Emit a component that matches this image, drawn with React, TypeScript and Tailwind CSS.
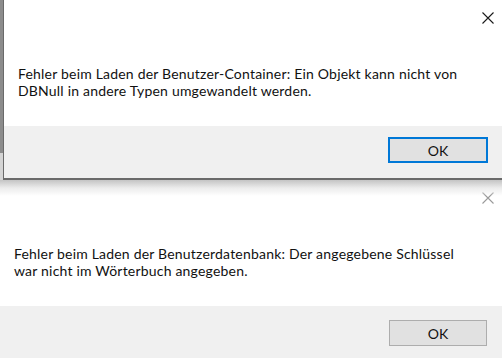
import React from "react";

function CloseX({ color }: { color: string }) {
  return (
    <svg width="14" height="14" viewBox="0 0 14 14" className="absolute right-[7px] top-[11px]">
      <path d="M1.5 1.5 L12.5 12.5 M12.5 1.5 L1.5 12.5" stroke={color} strokeWidth="1.1" fill="none" />
    </svg>
  );
}

function Dialog({
  lines,
  focused,
}: {
  lines: [string, string];
  focused: boolean;
}) {
  return (
    <div className="relative flex flex-col flex-1">
      <div className="relative h-[126px] bg-white">
        <CloseX color={focused ? "#1a1a1a" : "#9a9a9a"} />
        <p className="pt-[65px] pl-[14px] text-[14px] leading-[17px] text-[#111] tracking-[0.2px] whitespace-nowrap">
          {lines[0]}
          <br />
          {lines[1]}
        </p>
      </div>
      <div className="h-[52px] bg-[#f0f0f0] flex items-start justify-end pr-[14px] pt-[11px]">
        {focused ? (
          <div className="w-[100px] h-[26px] border-2 border-[#0078d7] bg-[#e1e1e1] flex items-center justify-center text-[14px] text-[#111]">
            OK
          </div>
        ) : (
          <div className="w-[98px] h-[26px] mt-[3px] mr-[1px] border border-[#adadad] bg-[#e1e1e1] flex items-center justify-center text-[14px] text-[#111]">
            OK
          </div>
        )}
      </div>
    </div>
  );
}

export default function App() {
  return (
    <div
      className="w-[502px] h-[358px] overflow-hidden bg-white flex flex-col"
      style={{ fontFamily: 'Lato, "Open Sans", sans-serif' }}
    >
      <div className="flex h-[180px]">
        <div className="w-[3px] flex flex-col">
          <div className="h-[153px] bg-[#8c8c8c]" />
          <div className="flex-1 bg-[#d4d4d4]" />
        </div>
        <div className="flex-1 flex flex-col border-l border-b-2 border-[#6a6a6a]">
          <Dialog
            focused
            lines={[
              "Fehler beim Laden der Benutzer-Container: Ein Objekt kann nicht von",
              "DBNull in andere Typen umgewandelt werden.",
            ]}
          />
        </div>
      </div>
      <div className="relative flex flex-col h-[178px]">
        <Dialog
          focused={false}
          lines={[
            "Fehler beim Laden der Benutzerdatenbank: Der angegebene Schlüssel",
            "war nicht im Wörterbuch angegeben.",
          ]}
        />
        <div className="absolute left-0 right-0 top-0 h-[16px] bg-gradient-to-b from-[#c4c4c4] via-[#ececec] to-transparent pointer-events-none" />
      </div>
    </div>
  );
}
